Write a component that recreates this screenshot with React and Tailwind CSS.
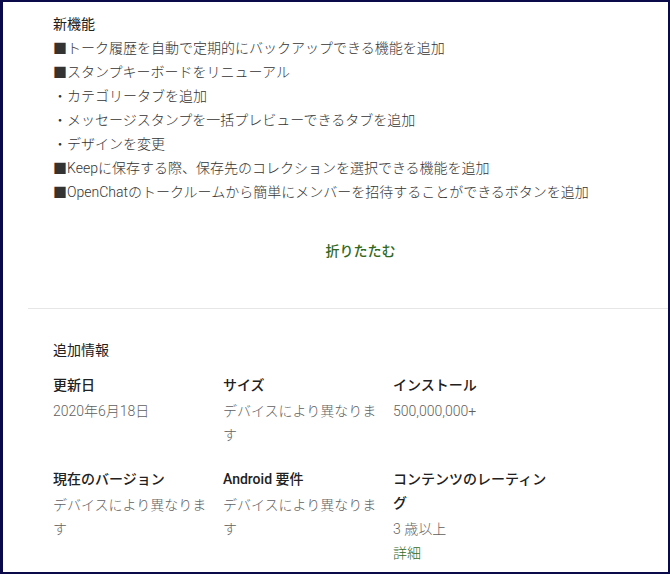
import React from 'react';

const lines = [
    '■トーク履歴を自動で定期的にバックアップできる機能を追加',
    '■スタンプキーボードをリニューアル',
    '・カテゴリータブを追加',
    '・メッセージスタンプを一括プレビューできるタブを追加',
    '・デザインを変更',
    '■Keepに保存する際、保存先のコレクションを選択できる機能を追加',
    '■OpenChatのトークルームから簡単にメンバーを招待することができるボタンを追加',
];

const InfoItem = ({ label, children }) => (
    <div className="w-[170px] pr-[10px]">
        <div className="mb-[2px] text-[#212121] font-medium">{label}</div>
        <div className="font-light text-[#5f5f5f]">{children}</div>
    </div>
);

const App = () => {
    return (
        <div
            className="w-[670px] h-[574px] overflow-hidden bg-white border-t-2 border-r-2 border-b-2 border-l-[3px] border-[#0a0a4a] text-[14px] leading-[24px]"
            style={{ fontFamily: 'Roboto, "Noto Sans CJK JP", sans-serif' }}
        >
            {/* 新機能 */}
            <div className="pl-[50px] pt-[10px]">
                <div className="text-[#212121]">新機能</div>
                {lines.map((line) => (
                    <div key={line} className="font-light text-[#333333]">{line}</div>
                ))}
                <div className="mt-[35px] flex justify-center">
                    <button className="text-[14px] font-medium text-[#33691e]">折りたたむ</button>
                </div>
            </div>

            <div className="ml-[25px] mt-[45px] h-px bg-[#e6e6e6]" />

            {/* 追加情報 */}
            <div className="pl-[50px] pt-[29px]">
                <div className="text-[#212121]">追加情報</div>
                <div className="mt-[11px] flex">
                    <InfoItem label="更新日">2020年6月18日</InfoItem>
                    <InfoItem label="サイズ">デバイスにより異なります</InfoItem>
                    <InfoItem label="インストール">500,000,000+</InfoItem>
                </div>
                <div className="mt-[20px] flex">
                    <InfoItem label="現在のバージョン">デバイスにより異なります</InfoItem>
                    <InfoItem label="Android 要件">デバイスにより異なります</InfoItem>
                    <InfoItem label="コンテンツのレーティング">
                        <div>3 歳以上</div>
                        <a className="text-[#33691e]">詳細</a>
                    </InfoItem>
                </div>
            </div>
        </div>
    );
};

export default App;
